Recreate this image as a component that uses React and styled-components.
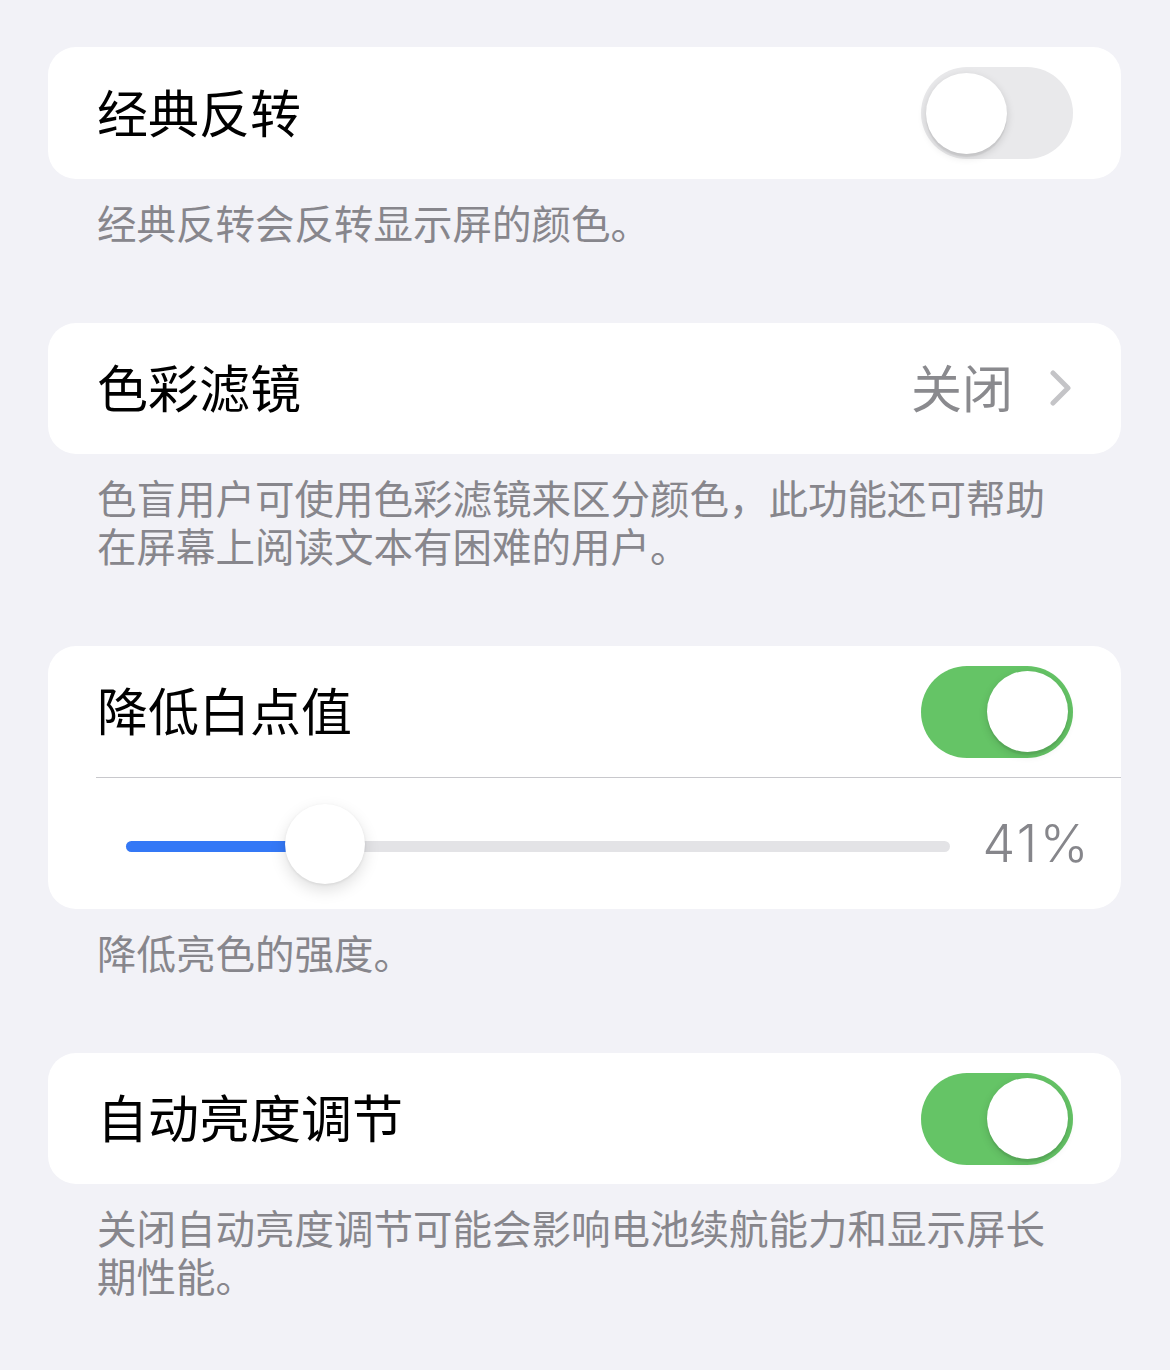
import React from 'react';
import styled, { createGlobalStyle } from 'styled-components';

const GlobalStyle = createGlobalStyle`
  html, body {
    margin: 0;
    padding: 0;
    background: #f2f2f7;
  }
  body {
    font-family: "Noto Sans CJK SC", "Noto Sans", sans-serif;
    -webkit-font-smoothing: antialiased;
  }
`;

const Page = styled.div`
  width: 1073px;
  padding: 47px 49px 40px 48px;
  display: flex;
  flex-direction: column;
`;

const Group = styled.section`
  background: #ffffff;
  border-radius: 28px;
  overflow: hidden;
`;

const Row = styled.div`
  height: ${props => props.height || 132}px;
  display: flex;
  align-items: center;
  justify-content: space-between;
  padding: 0 48px 0 49px;
  box-sizing: border-box;
`;

const Title = styled.span`
  font-size: 51px;
  line-height: 1;
  color: #000000;
  margin-bottom: 4px;
`;

const Detail = styled.div`
  display: flex;
  align-items: center;
  gap: 36px;
  font-size: 51px;
  line-height: 1;
  color: #8a8a8e;
  margin-bottom: 2px;

  span {
    margin-bottom: 2px;
  }
`;

const Divider = styled.div`
  height: 1px;
  margin-left: 48px;
  background: #c8c8cc;
`;

const Footer = styled.p`
  margin: 0;
  padding: 19px 49px 77px 49px;
  font-size: 39.5px;
  line-height: 48px;
  color: #87868c;
`;

const Track = styled.button`
  width: 152px;
  height: 92px;
  border: none;
  border-radius: 46px;
  background: ${props => (props.on ? '#65c466' : '#e9e9eb')};
  display: flex;
  align-items: center;
  justify-content: ${props => (props.on ? 'flex-end' : 'flex-start')};
  padding: 0 5px;
  box-sizing: border-box;
  cursor: pointer;
`;

const Knob = styled.span`
  width: 81px;
  height: 81px;
  border-radius: 50%;
  background: #ffffff;
  box-shadow: 0 3px 8px rgba(0, 0, 0, 0.15), 0 3px 1px rgba(0, 0, 0, 0.06);
`;

const SliderRow = styled.div`
  height: 131px;
  display: flex;
  align-items: center;
  gap: 32px;
  padding: 6px 30px 0 78px;
  box-sizing: border-box;
`;

const SliderRail = styled.div`
  position: relative;
  flex: 1;
  height: 11px;
  border-radius: 6px;
  background: #e3e3e6;
`;

const SliderFill = styled.div`
  position: absolute;
  left: 0;
  top: 0;
  bottom: 0;
  border-radius: 6px;
  background: #3478f6;
`;

const SliderThumb = styled.div`
  position: absolute;
  top: 50%;
  width: 80px;
  height: 80px;
  margin-top: -43px;
  border-radius: 50%;
  background: #ffffff;
  box-shadow: 0 6px 16px rgba(0, 0, 0, 0.13), 0 1px 3px rgba(0, 0, 0, 0.08);
`;

const Value = styled.span`
  font-family: Inter, "Noto Sans", sans-serif;
  font-size: 52px;
  font-weight: 300;
  line-height: 1;
  color: #86868b;
  letter-spacing: 2.5px;
  margin-top: -6px;
`;

const Toggle = ({ on }) => (
  <Track on={on ? 1 : 0} aria-pressed={on}>
    <Knob />
  </Track>
);

const Chevron = () => (
  <svg width="24" height="36" viewBox="0 0 24 36">
    <polyline
      points="4,3 19,18 4,33"
      fill="none"
      stroke="#c4c4c7"
      strokeWidth="5"
      strokeLinecap="round"
      strokeLinejoin="round"
    />
  </svg>
);

// white point range runs 25%–100%, thumb travels within the rail
const Slider = ({ value }) => {
  const ratio = (value - 25) / 75;
  return (
    <SliderRow>
      <SliderRail>
        <SliderFill style={{ width: `calc(${ratio} * (100% - 80px) + 40px)` }} />
        <SliderThumb style={{ left: `calc(${ratio} * (100% - 80px))` }} />
      </SliderRail>
      <Value>{value}%</Value>
    </SliderRow>
  );
};

export default function App() {
  return (
    <>
      <GlobalStyle />
      <Page>
        <Group>
          <Row>
            <Title>经典反转</Title>
            <Toggle on={false} />
          </Row>
        </Group>
        <Footer>经典反转会反转显示屏的颜色。</Footer>

        <Group>
          <Row height={131}>
            <Title>色彩滤镜</Title>
            <Detail>
              <span>关闭</span>
              <Chevron />
            </Detail>
          </Row>
        </Group>
        <Footer>色盲用户可使用色彩滤镜来区分颜色，此功能还可帮助在屏幕上阅读文本有困难的用户。</Footer>

        <Group>
          <Row height={131}>
            <Title>降低白点值</Title>
            <Toggle on />
          </Row>
          <Divider />
          <Slider value={41} />
        </Group>
        <Footer>降低亮色的强度。</Footer>

        <Group>
          <Row height={131}>
            <Title>自动亮度调节</Title>
            <Toggle on />
          </Row>
        </Group>
        <Footer>关闭自动亮度调节可能会影响电池续航能力和显示屏长期性能。</Footer>
      </Page>
    </>
  );
}
